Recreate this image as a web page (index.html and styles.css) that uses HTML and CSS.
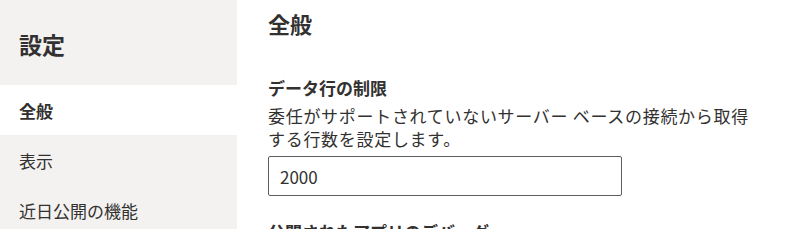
FILE: index.html
```html
<!DOCTYPE html>
<html lang="ja">
<head>
    <meta charset="UTF-8">
    <title>設定</title>
    <link rel="stylesheet" href="styles.css">
</head>
<body>
    <div class="settings">
        <nav class="sidebar">
            <div class="sidebar-title">設定</div>
            <div class="nav-item selected">全般</div>
            <div class="nav-item">表示</div>
            <div class="nav-item">近日公開の機能</div>
        </nav>

        <main class="content">
            <h2 class="page-title">全般</h2>

            <div class="setting">
                <div class="setting-label">データ行の制限</div>
                <p class="setting-desc">委任がサポートされていないサーバー ベースの接続から取得する行数を設定します。</p>
                <input class="text-field" type="text" value="2000">
            </div>

            <div class="setting">
                <div class="setting-label">公開されたアプリのデバッグ</div>
            </div>
        </main>
    </div>
</body>
</html>
```

FILE: styles.css
```css
body {
    margin: 0;
    font-family: "Noto Sans CJK JP", "Noto Sans", sans-serif;
    color: #323130;
    background-color: #fff;
}
.settings {
    display: flex;
    height: 100vh;
    overflow: hidden;
}
.sidebar {
    width: 237px;
    flex-shrink: 0;
    background-color: #f3f2f1;
}
.sidebar-title {
    height: 85px;
    display: flex;
    align-items: center;
    padding: 3px 0 0 19px;
    box-sizing: border-box;
    font-size: 23px;
    font-weight: bold;
}
.nav-item {
    height: 50px;
    display: flex;
    align-items: center;
    padding-left: 19px;
    font-size: 17px;
}
.nav-item.selected {
    background-color: #fff;
    font-weight: bold;
}
.content {
    padding-left: 31px;
}
.page-title {
    margin: 0;
    font-size: 22px;
    line-height: 46px;
    font-weight: bold;
}
.setting {
    margin-top: 30px;
}
.setting + .setting {
    margin-top: 24px;
}
.setting-label {
    font-size: 17px;
    line-height: 24px;
    font-weight: bold;
}
.setting-desc {
    margin: 4px 0 0;
    max-width: 492px;
    font-size: 17px;
    line-height: 23px;
    letter-spacing: 0.7px;
}
.text-field {
    display: block;
    margin-top: 6px;
    width: 354px;
    height: 40px;
    box-sizing: border-box;
    padding: 0 11px;
    border: 1px solid #605e5c;
    border-radius: 2px;
    font-family: inherit;
    font-size: 17px;
    color: #323130;
}
```
